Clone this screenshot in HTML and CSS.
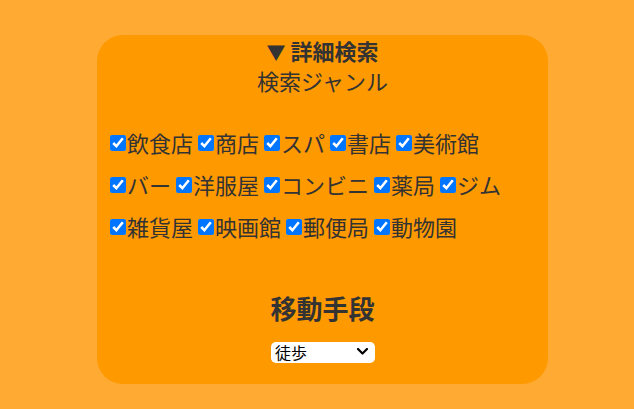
FILE: index.html
```html
<!DOCTYPE html>
<html lang="ja">
<head>
<meta charset="utf-8">
<title>詳細検索</title>
<link rel="stylesheet" href="styles.css">
</head>
<body>
<div class="panel">
  <div class="summary"><span class="marker">▼</span> 詳細検索</div>
  <div class="subtitle">検索ジャンル</div>
  <div class="genres">
    <label class="genre"><input type="checkbox" checked>飲食店</label>
    <label class="genre"><input type="checkbox" checked>商店</label>
    <label class="genre"><input type="checkbox" checked>スパ</label>
    <label class="genre"><input type="checkbox" checked>書店</label>
    <label class="genre"><input type="checkbox" checked>美術館</label>
    <label class="genre"><input type="checkbox" checked>バー</label>
    <label class="genre"><input type="checkbox" checked>洋服屋</label>
    <label class="genre"><input type="checkbox" checked>コンビニ</label>
    <label class="genre"><input type="checkbox" checked>薬局</label>
    <label class="genre"><input type="checkbox" checked>ジム</label>
    <label class="genre"><input type="checkbox" checked>雑貨屋</label>
    <label class="genre"><input type="checkbox" checked>映画館</label>
    <label class="genre"><input type="checkbox" checked>郵便局</label>
    <label class="genre"><input type="checkbox" checked>動物園</label>
  </div>
  <div class="heading">移動手段</div>
  <div class="select-row">
    <div class="select-wrap">
      <select class="mode">
        <option>徒歩</option>
        <option>自転車</option>
        <option>車</option>
      </select>
      <svg class="chevron" width="11" height="7" viewBox="0 0 11 7"><path d="M1 1 L5.5 5.5 L10 1" fill="none" stroke="#000" stroke-width="2.2" stroke-linecap="round" stroke-linejoin="round"/></svg>
    </div>
  </div>
</div>
</body>
</html>
```

FILE: styles.css
```css
html, body {
  margin: 0;
  padding: 0;
}
body {
  background: #ffaa33;
  font-family: "Noto Sans CJK JP", "Noto Sans", sans-serif;
  color: #333333;
  width: 634px;
  height: 409px;
  overflow: hidden;
}
.panel {
  box-sizing: border-box;
  width: 451px;
  margin: 35px 0 0 97px;
  padding: 0 13px 23px;
  background: #ff9900;
  border-radius: 26px;
}
.summary {
  text-align: center;
  font-size: 22px;
  font-weight: 700;
  line-height: 30px;
  height: 30px;
}
.marker {
  font-size: 19px;
}
.subtitle {
  text-align: center;
  font-size: 22px;
  line-height: 30px;
  height: 32px;
}
.genres {
  margin-top: 24px;
  display: flex;
  flex-wrap: wrap;
  column-gap: 5px;
}
.genre {
  display: flex;
  align-items: center;
  height: 42px;
  font-size: 22px;
  line-height: 42px;
}
.genre input {
  width: 16px;
  height: 16px;
  margin: 1px 1px 0 0;
}
.heading {
  margin-top: 43px;
  text-align: center;
  font-size: 26px;
  font-weight: 700;
  line-height: 36px;
  height: 36px;
}
.select-row {
  margin-top: 14px;
  display: flex;
  justify-content: center;
}
.select-wrap {
  position: relative;
  width: 104px;
  height: 21px;
  margin-left: 1px;
}
.mode {
  appearance: none;
  -webkit-appearance: none;
  box-sizing: border-box;
  width: 104px;
  height: 21px;
  border: none;
  border-radius: 5px;
  background: #ffffff;
  color: #000000;
  font-family: "Noto Sans CJK JP", sans-serif;
  font-size: 16px;
  line-height: 21px;
  padding: 0 0 0 4px;
  margin: 0;
  outline: none;
}
.chevron {
  position: absolute;
  right: 7px;
  top: 8px;
  pointer-events: none;
}
```
